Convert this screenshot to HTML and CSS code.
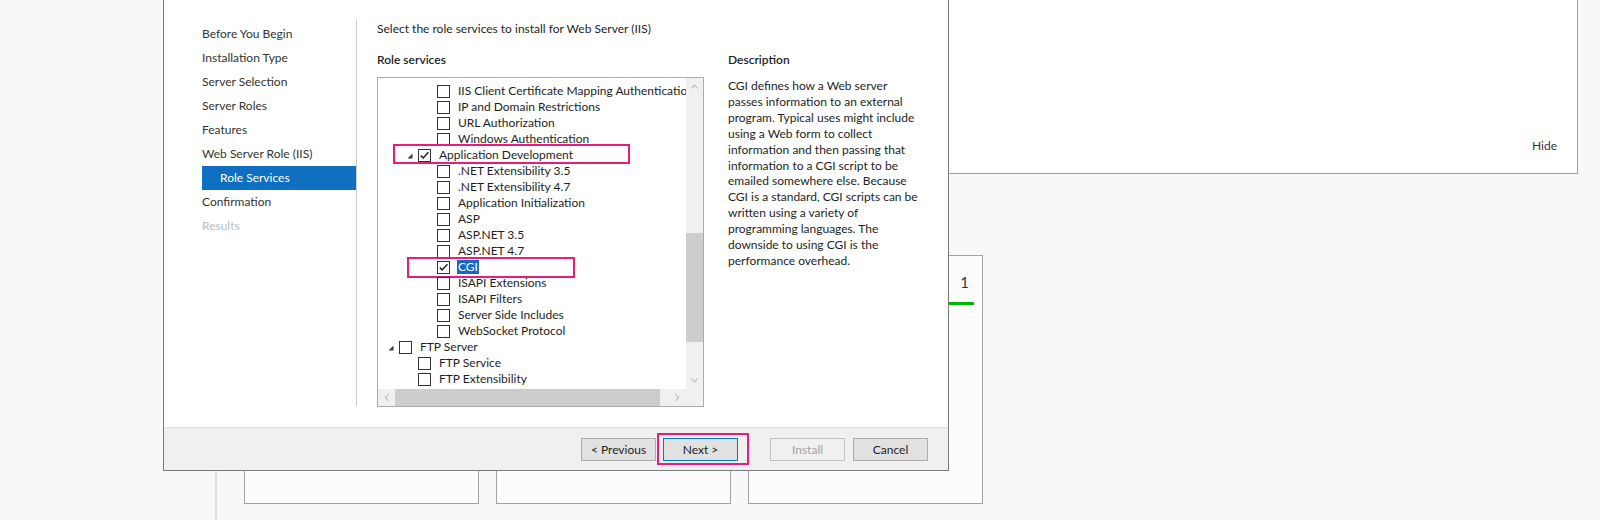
FILE: index.html
```html
<!DOCTYPE html>
<html lang="en">
<head>
  <meta charset="UTF-8" />
  <meta name="viewport" content="width=device-width, initial-scale=1.0"/>
  <title>Add Roles and Features Wizard</title>
  <link rel="stylesheet" href="styles.css">
</head>
<body>
  <div class="dash">
    <div class="welcome">
      <span class="hide-link">Hide</span>
    </div>
    <div class="tiles">
      <div class="tile"></div>
      <div class="tile"></div>
      <div class="tile">
        <div class="tile-head"><span class="count">1</span></div>
        <div class="tile-bar"></div>
      </div>
    </div>
  </div>

  <div class="wizard">
    <div class="wizard-main">
      <ul class="steps">
        <li>Before You Begin</li>
        <li>Installation Type</li>
        <li>Server Selection</li>
        <li>Server Roles</li>
        <li>Features</li>
        <li>Web Server Role (IIS)</li>
        <li class="current">Role Services</li>
        <li>Confirmation</li>
        <li class="disabled">Results</li>
      </ul>
      <div class="steps-sep"></div>

      <div class="page">
        <p class="intro">Select the role services to install for Web Server (IIS)</p>
        <div class="columns">
          <div class="services">
            <div class="label">Role services</div>
            <div class="tree">
              <div class="tree-view">
                <div class="node l3"><span class="exp"></span><span class="cb"></span><span class="lbl">IIS Client Certificate Mapping Authentication</span></div>
                <div class="node l3"><span class="exp"></span><span class="cb"></span><span class="lbl">IP and Domain Restrictions</span></div>
                <div class="node l3"><span class="exp"></span><span class="cb"></span><span class="lbl">URL Authorization</span></div>
                <div class="node l3"><span class="exp"></span><span class="cb"></span><span class="lbl">Windows Authentication</span></div>
                <div class="node l2">
                  <span class="exp"><svg width="6" height="6" viewBox="0 0 6 6"><polygon points="5.5,0.5 5.5,5.5 0.5,5.5" fill="#3a3a3a"/></svg></span>
                  <span class="cb"><svg width="11" height="11" viewBox="0 0 11 11"><polyline points="1.8,5.6 4.2,8 9.4,2.2" fill="none" stroke="#1e1e1e" stroke-width="1.5"/></svg></span>
                  <span class="lbl">Application Development</span>
                  <span class="mark mark-app"></span>
                </div>
                <div class="node l3"><span class="exp"></span><span class="cb"></span><span class="lbl">.NET Extensibility 3.5</span></div>
                <div class="node l3"><span class="exp"></span><span class="cb"></span><span class="lbl">.NET Extensibility 4.7</span></div>
                <div class="node l3"><span class="exp"></span><span class="cb"></span><span class="lbl">Application Initialization</span></div>
                <div class="node l3"><span class="exp"></span><span class="cb"></span><span class="lbl">ASP</span></div>
                <div class="node l3"><span class="exp"></span><span class="cb"></span><span class="lbl">ASP.NET 3.5</span></div>
                <div class="node l3"><span class="exp"></span><span class="cb"></span><span class="lbl">ASP.NET 4.7</span></div>
                <div class="node l3">
                  <span class="exp"></span>
                  <span class="cb"><svg width="11" height="11" viewBox="0 0 11 11"><polyline points="1.8,5.6 4.2,8 9.4,2.2" fill="none" stroke="#1e1e1e" stroke-width="1.5"/></svg></span>
                  <span class="lbl sel">CGI</span>
                  <span class="mark mark-cgi"></span>
                </div>
                <div class="node l3"><span class="exp"></span><span class="cb"></span><span class="lbl">ISAPI Extensions</span></div>
                <div class="node l3"><span class="exp"></span><span class="cb"></span><span class="lbl">ISAPI Filters</span></div>
                <div class="node l3"><span class="exp"></span><span class="cb"></span><span class="lbl">Server Side Includes</span></div>
                <div class="node l3"><span class="exp"></span><span class="cb"></span><span class="lbl">WebSocket Protocol</span></div>
                <div class="node l1">
                  <span class="exp"><svg width="6" height="6" viewBox="0 0 6 6"><polygon points="5.5,0.5 5.5,5.5 0.5,5.5" fill="#3a3a3a"/></svg></span>
                  <span class="cb"></span><span class="lbl">FTP Server</span>
                </div>
                <div class="node l2"><span class="exp"></span><span class="cb"></span><span class="lbl">FTP Service</span></div>
                <div class="node l2"><span class="exp"></span><span class="cb"></span><span class="lbl">FTP Extensibility</span></div>
              </div>

              <div class="vscroll">
                <div class="sb-btn"><svg width="7" height="5" viewBox="0 0 7 5"><polyline points="0.5,4.5 3.5,1 6.5,4.5" fill="none" stroke="#a6a6a6"/></svg></div>
                <div class="sb-track v"><div class="thumb"></div></div>
                <div class="sb-btn"><svg width="7" height="5" viewBox="0 0 7 5"><polyline points="0.5,0.5 3.5,4 6.5,0.5" fill="none" stroke="#a6a6a6"/></svg></div>
              </div>
              <div class="hscroll">
                <div class="sb-btn"><svg width="5" height="7" viewBox="0 0 5 7"><polyline points="4.5,0.5 1,3.5 4.5,6.5" fill="none" stroke="#a6a6a6"/></svg></div>
                <div class="sb-track h"><div class="thumb"></div></div>
                <div class="sb-btn"><svg width="5" height="7" viewBox="0 0 5 7"><polyline points="0.5,0.5 4,3.5 0.5,6.5" fill="none" stroke="#a6a6a6"/></svg></div>
              </div>
              <div class="corner"></div>
            </div>
          </div>

          <div class="desc">
            <div class="label">Description</div>
            <p>CGI defines how a Web server<br>
            passes information to an external<br>
            program. Typical uses might include<br>
            using a Web form to collect<br>
            information and then passing that<br>
            information to a CGI script to be<br>
            emailed somewhere else. Because<br>
            CGI is a standard, CGI scripts can be<br>
            written using a variety of<br>
            programming languages. The<br>
            downside to using CGI is the<br>
            performance overhead.</p>
          </div>
        </div>
      </div>
    </div>

    <div class="wizard-foot">
      <button class="btn">&lt; Previous</button>
      <button class="btn btn-next">Next &gt;<span class="mark mark-next"></span></button>
      <button class="btn btn-install" disabled>Install</button>
      <button class="btn btn-cancel">Cancel</button>
    </div>
  </div>
</body>
</html>
```

FILE: styles.css
```css
body {
  margin: 0;
  height: 520px;
  overflow: hidden;
  background-color: #f8f8f8;
  font-family: "Segoe UI", Lato, "Noto Sans", sans-serif;
  font-size: 12px;
  color: #1e1e1e;
}

/* dashboard behind the wizard */
.dash {
  margin-left: 215px;
  border-left: 2px solid #dedede;
  padding: 0 22px 0 27px;
  height: 520px;
}

.welcome {
  height: 174px;
  box-sizing: border-box;
  background-color: #fff;
  border: 1px solid #9d9d9d;
  border-top: none;
  display: flex;
  justify-content: flex-end;
  align-items: flex-end;
  padding: 0 20px 19px 0;
}

.hide-link {
  line-height: 16px;
  color: #333;
}

.tiles {
  display: flex;
  gap: 17px;
  margin-top: 81px;
}

.tile {
  width: 235px;
  height: 249px;
  box-sizing: border-box;
  border: 1px solid #a3a3a3;
  background-color: #fcfcfc;
}

.tile-head {
  display: flex;
  justify-content: flex-end;
  padding: 17px 13px 0 0;
  font-size: 15px;
  line-height: 18px;
  color: #333;
}

.tile-bar {
  height: 3px;
  margin: 11px 8px 0 8px;
  background-color: #00b800;
}

/* wizard window */
.wizard {
  position: absolute;
  left: 163px;
  top: 0;
  width: 786px;
  height: 471px;
  box-sizing: border-box;
  border: 1px solid #7a7a7a;
  border-top: none;
  background-color: #fff;
  display: flex;
  flex-direction: column;
}

.wizard-main {
  display: flex;
  height: 427px;
}

.steps {
  list-style: none;
  margin: 0;
  width: 192px;
  box-sizing: border-box;
  padding: 22px 0 0 38px;
  color: #333;
}

.steps li {
  height: 24px;
  line-height: 24px;
  white-space: nowrap;
}

.steps li.current {
  background-color: #0f6fc0;
  color: #fff;
  padding-left: 18px;
}

.steps li.disabled {
  color: #bdbdbd;
}

.steps-sep {
  flex: none;
  width: 1px;
  height: 386px;
  margin-top: 20px;
  background-color: #cbcbcb;
}

.page {
  flex: 1;
  padding: 21px 0 0 20px;
}

.intro {
  margin: 0;
  line-height: 16px;
}

.columns {
  display: flex;
  margin-top: 15px;
}

.services {
  width: 327px;
}

.label {
  line-height: 16px;
  font-weight: 600;
  margin-bottom: 9px;
}

.desc {
  margin-left: 24px;
  width: 200px;
}

.desc .label {
  margin-bottom: 10px;
}

.desc p {
  margin: 0;
  line-height: 15.9px;
  white-space: nowrap;
}

/* tree view */
.tree {
  width: 327px;
  height: 330px;
  box-sizing: border-box;
  border: 1px solid #ababab;
  display: grid;
  grid-template-columns: 308px 17px;
  grid-template-rows: 311px 17px;
}

.tree-view {
  overflow: hidden;
  padding-top: 5px;
}

.node {
  position: relative;
  display: flex;
  align-items: center;
  height: 16px;
  white-space: nowrap;
}

.l1 { padding-left: 10px; }
.l2 { padding-left: 29px; }
.l3 { padding-left: 48px; }

.exp {
  flex: none;
  width: 11px;
  height: 16px;
  display: flex;
  align-items: center;
  padding-top: 2px;
  box-sizing: border-box;
}

.cb {
  flex: none;
  width: 13px;
  height: 13px;
  box-sizing: border-box;
  border: 1px solid #333;
  background-color: #fff;
  display: flex;
  align-items: center;
  justify-content: center;
}

.lbl {
  margin-left: 7px;
  padding: 0 1px;
  line-height: 14px;
}

.lbl.sel {
  background-color: #1667c6;
  color: #fff;
}

.mark {
  position: absolute;
  box-sizing: border-box;
  border: 2px solid #ec1a7a;
}

.mark-app {
  left: 15px;
  top: -3px;
  width: 237px;
  height: 20px;
}

.mark-cgi {
  left: 29px;
  top: -2px;
  width: 168px;
  height: 21px;
}

.vscroll {
  background-color: #f0f0f0;
  display: flex;
  flex-direction: column;
}

.hscroll {
  background-color: #f0f0f0;
  display: flex;
}

.sb-btn {
  flex: none;
  width: 17px;
  height: 17px;
  display: flex;
  align-items: center;
  justify-content: center;
}

.sb-track {
  flex: 1;
}

.sb-track.v {
  padding-top: 138px;
}

.sb-track.v .thumb {
  height: 109px;
  background-color: #cdcdcd;
}

.sb-track.h .thumb {
  width: 265px;
  height: 17px;
  background-color: #cdcdcd;
}

.corner {
  background-color: #f0f0f0;
}

/* footer buttons */
.wizard-foot {
  height: 43px;
  box-sizing: border-box;
  border-top: 1px solid #dfdfdf;
  background-color: #f0f0f0;
  display: flex;
  justify-content: flex-end;
  align-items: flex-start;
  padding: 10px 20px 0 0;
}

.btn {
  width: 75px;
  height: 23px;
  padding: 0;
  font-family: inherit;
  font-size: 12px;
  color: #1e1e1e;
  background-color: #e1e1e1;
  border: 1px solid #adadad;
}

.btn-next {
  position: relative;
  margin-left: 7px;
  border-color: #0078d7;
}

.btn-install {
  margin-left: 32px;
  background-color: #f0f0f0;
  border-color: #c2c2c2;
  color: #a3a3a3;
}

.btn-cancel {
  margin-left: 8px;
}

.mark-next {
  left: -7px;
  top: -6px;
  width: 92px;
  height: 32px;
}
```
